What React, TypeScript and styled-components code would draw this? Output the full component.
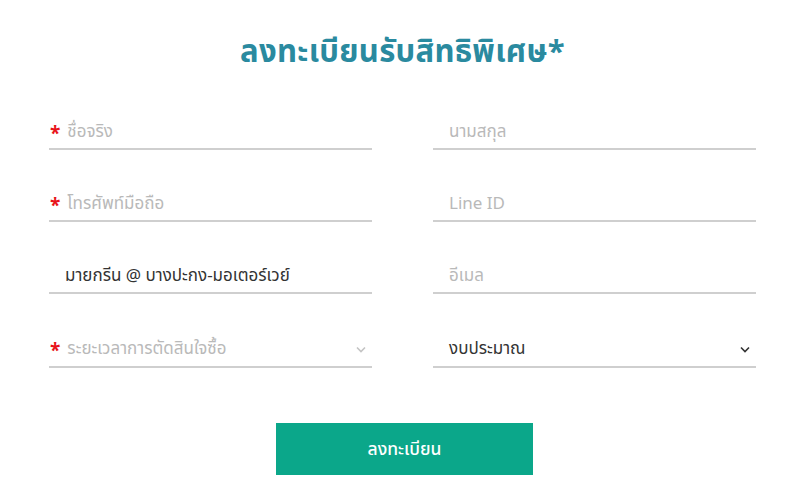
import React from "react";
import styled, { createGlobalStyle } from "styled-components";

const Global = createGlobalStyle`
  html, body { margin: 0; padding: 0; background: #fff; }
  body { font-family: "Noto Sans Thai", "Noto Sans", "Liberation Sans", sans-serif; }
  * { box-sizing: border-box; }
`;

const Page = styled.div`
  width: 800px;
  height: 498px;
  padding: 34px 0 0 5px;
  display: flex;
  flex-direction: column;
  align-items: center;
`;

const Title = styled.h1`
  margin: 0;
  font-size: 31px;
  line-height: 38px;
  font-weight: 700;
  color: #2a8a9f;
  letter-spacing: 0.3px;
`;

const Form = styled.form`
  margin-top: 40px;
  width: 707px;
  display: grid;
  grid-template-columns: 323px 323px;
  column-gap: 61px;
  row-gap: 34px;
`;

const Field = styled.div<{ $tall?: boolean }>`
  height: ${(p) => (p.$tall ? 40 : 38)}px;
  border-bottom: 2px solid #cfcfcf;
  display: flex;
  align-items: center;
  gap: 7px;
  padding: 4px 2px 0 1px;
`;

const Star = styled.span`
  color: #e8141b;
  font-size: 19px;
  font-weight: 700;
  line-height: 1;
  padding-top: 5px;
`;

const Input = styled.input<{ $pad?: boolean }>`
  flex: 1;
  min-width: 0;
  border: none;
  outline: none;
  background: transparent;
  font-family: inherit;
  font-size: 17px;
  color: #333;
  padding: 0 0 0 ${(p) => (p.$pad ? 15 : 0)}px;
  &::placeholder { color: #b9b9b9; }
`;

const SelectText = styled.span<{ $muted?: boolean }>`
  flex: 1;
  font-size: 17px;
  color: ${(p) => (p.$muted ? "#b9b9b9" : "#333")};
  padding-left: ${(p) => (p.$muted ? 0 : 15)}px;
`;

const Chevron = ({ color }: { color: string }) => (
  <svg width="10" height="7" viewBox="0 0 10 7" style={{ marginRight: 4 }}>
    <path d="M1 1.5 L5 5.5 L9 1.5" fill="none" stroke={color} strokeWidth="1.6" />
  </svg>
);

const Actions = styled.div`
  margin: 55px 0 0 4px;
`;

const Button = styled.button`
  width: 257px;
  height: 52px;
  border: none;
  background: #0ba78a;
  color: #fff;
  font-family: inherit;
  font-size: 17.5px;
  font-weight: 500;
  cursor: pointer;
`;

export default function App() {
  return (
    <>
      <Global />
      <Page>
        <Title>ลงทะเบียนรับสิทธิพิเศษ*</Title>
        <Form onSubmit={(e) => e.preventDefault()}>
          <Field>
            <Star>*</Star>
            <Input placeholder="ชื่อจริง" />
          </Field>
          <Field>
            <Input $pad placeholder="นามสกุล" />
          </Field>
          <Field>
            <Star>*</Star>
            <Input placeholder="โทรศัพท์มือถือ" />
          </Field>
          <Field>
            <Input $pad placeholder="Line ID" />
          </Field>
          <Field>
            <Input $pad defaultValue="มายกรีน @ บางปะกง-มอเตอร์เวย์" />
          </Field>
          <Field>
            <Input $pad placeholder="อีเมล" />
          </Field>
          <Field $tall>
            <Star>*</Star>
            <SelectText $muted>ระยะเวลาการตัดสินใจซื้อ</SelectText>
            <Chevron color="#c4c4c4" />
          </Field>
          <Field $tall>
            <SelectText>งบประมาณ</SelectText>
            <Chevron color="#333" />
          </Field>
        </Form>
        <Actions>
          <Button type="button">ลงทะเบียน</Button>
        </Actions>
      </Page>
    </>
  );
}
